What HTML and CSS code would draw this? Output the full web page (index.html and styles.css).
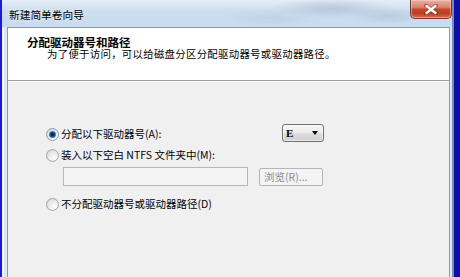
FILE: index.html
```html
<!DOCTYPE html>
<html lang="zh-CN">
<head>
<meta charset="utf-8">
<title>新建简单卷向导</title>
<link rel="stylesheet" href="styles.css">
</head>
<body>
<div class="desk">
  <div class="window">
    <div class="titlebar">
      <span class="title">新建简单卷向导</span>
      <div class="close">
        <svg width="14" height="11" viewBox="0 0 14 11"><path d="M2 1.5 L12 9.5 M12 1.5 L2 9.5" stroke="#6a2418" stroke-width="3.8" stroke-linecap="round" opacity="0.55"/><path d="M2.5 2 L11.5 9 M11.5 2 L2.5 9" stroke="#fff" stroke-width="2.4" stroke-linecap="round"/></svg>
      </div>
    </div>
    <div class="client">
      <div class="header">
        <div class="h-title">分配驱动器号和路径</div>
        <div class="h-sub">为了便于访问，可以给磁盘分区分配驱动器号或驱动器路径。</div>
      </div>
      <div class="body">
        <div class="options">
          <div class="row row-drive">
            <div class="opt"><span class="radio checked"></span><span class="lbl">分配以下驱动器号(A):</span></div>
            <div class="combo"><span class="combo-val">E</span><span class="arrow"></span></div>
          </div>
          <div class="row row-mount">
            <div class="opt"><span class="radio"></span><span class="lbl">装入以下空白 NTFS 文件夹中(M):</span></div>
          </div>
          <div class="row row-folder">
            <div class="textbox"></div>
            <div class="btn">浏览(R)...</div>
          </div>
          <div class="row row-none">
            <div class="opt"><span class="radio"></span><span class="lbl">不分配驱动器号或驱动器路径(D)</span></div>
          </div>
        </div>
      </div>
    </div>
  </div>
</div>
</body>
</html>
```
FILE: styles.css
```css
html, body {
  margin: 0;
  padding: 0;
}
body {
  width: 460px;
  height: 277px;
  overflow: hidden;
  font-family: "Noto Sans CJK SC", "Noto Sans", sans-serif;
  font-size: 10.5px;
  color: #000;
}
.desk {
  display: flex;
  height: 277px;
  box-sizing: border-box;
  padding-left: 2px;
  padding-right: 8px;
  background: linear-gradient(90deg, #1a1ed0 0 2px, #1418c0 2px 452px, #7088d8 452px 454px, #0c10a8 454px);
}
.window {
  flex: 1;
  display: flex;
  flex-direction: column;
  padding: 0 2px 0 5px;
  background: linear-gradient(90deg, #f4f8fc 0 2px, #dce9f2 2px 100%);
}
.titlebar {
  height: 27px;
  margin: 0 -2px 0 -5px;
  display: flex;
  justify-content: space-between;
  align-items: flex-start;
  background:
    radial-gradient(ellipse 60px 10px at 330px 8px, rgba(150,170,200,0.45), transparent),
    radial-gradient(ellipse 40px 8px at 385px 16px, rgba(150,170,200,0.35), transparent),
    radial-gradient(ellipse 50px 8px at 270px 18px, rgba(170,190,215,0.35), transparent),
    linear-gradient(180deg, #e4edf7 0%, #cddded 40%, #c9dbee 100%);
}
.title {
  padding-left: 7px;
  margin-top: 8px;
  line-height: 14px;
  font-size: 10.7px;
  color: #000;
  text-shadow: 0 0 4px rgba(255,255,255,0.9);
}
.close {
  width: 42px;
  height: 19px;
  box-sizing: border-box;
  border: 1px solid #7a3428;
  border-top: none;
  border-radius: 0 0 5px 5px;
  display: flex;
  align-items: center;
  justify-content: center;
  background: linear-gradient(180deg, #e8b0a2 0%, #d98570 40%, #c4472a 52%, #bf3d20 75%, #d8704e 100%);
  box-shadow: inset 0 0 0 1px rgba(255,220,210,0.45);
}
.client {
  flex: 1;
  display: flex;
  flex-direction: column;
  border: 1px solid #8c9cb0;
  border-bottom: none;
  background: #f0f0f0;
}
.header {
  height: 53px;
  box-sizing: border-box;
  background: #fff;
  border-bottom: 1px solid #a0a0a0;
  padding-top: 8px;
  padding-left: 19px;
}
.h-title {
  font-weight: bold;
  font-size: 11.5px;
  line-height: 12px;
}
.h-sub {
  padding-left: 20px;
  line-height: 12px;
  font-size: 10.4px;
  letter-spacing: 0.3px;
}
.body {
  flex: 1;
  border-top: 1px solid #fff;
  padding-top: 42px;
  padding-left: 38px;
}
.options {
  width: 278px;
  display: flex;
  flex-direction: column;
}
.row {
  display: flex;
  align-items: center;
}
.row-drive {
  height: 18px;
  justify-content: space-between;
}
.row-mount {
  height: 16px;
  margin-top: 5px;
}
.row-folder {
  margin-top: 4px;
  padding-left: 17px;
  gap: 11px;
}
.row-none {
  height: 16px;
  margin-top: 10px;
}
.opt {
  display: flex;
  align-items: center;
  line-height: 14px;
}
.row-drive .opt {
  margin-top: 2px;
}
.radio {
  width: 13px;
  height: 13px;
  box-sizing: border-box;
  border-radius: 50%;
  border: 1px solid #a4a6a8;
  background: radial-gradient(circle at 65% 70%, #ffffff 0%, #ececec 45%, #cfd0d2 100%);
  position: relative;
  margin-right: 2px;
}
.radio.checked {
  border-color: #8c9cb0;
}
.radio.checked::after {
  content: "";
  position: absolute;
  left: 2px;
  top: 2px;
  width: 7px;
  height: 7px;
  border-radius: 50%;
  background: radial-gradient(circle at 50% 50%, #0e2a48 0 28%, #2b6aa8 55%, #7fb9e8 100%);
}
.combo {
  width: 42px;
  height: 18px;
  box-sizing: border-box;
  border: 1px solid #707070;
  border-radius: 3px;
  background: linear-gradient(180deg, #f6f6f6 0%, #ebebeb 48%, #dddddd 52%, #cfcfcf 100%);
  display: flex;
  align-items: center;
  justify-content: space-between;
  padding: 0 5px 0 3px;
  box-shadow: inset 0 0 0 1px rgba(255,255,255,0.6);
}
.combo-val {
  font-weight: bold;
  font-family: "Liberation Serif", "Noto Sans CJK SC", serif;
  font-size: 11px;
  line-height: 12px;
}
.arrow {
  width: 0;
  height: 0;
  border-left: 3.5px solid transparent;
  border-right: 3.5px solid transparent;
  border-top: 4px solid #000;
}
.textbox {
  width: 185px;
  height: 19px;
  box-sizing: border-box;
  border: 1px solid #b5b9bd;
  background: #f4f4f4;
}
.btn {
  width: 64px;
  height: 18px;
  box-sizing: border-box;
  border: 1px solid #b3b6b9;
  border-radius: 2px;
  background: #f4f4f4;
  color: #8a8a8a;
  line-height: 16px;
  padding-left: 4px;
  font-size: 10.5px;
}
```
